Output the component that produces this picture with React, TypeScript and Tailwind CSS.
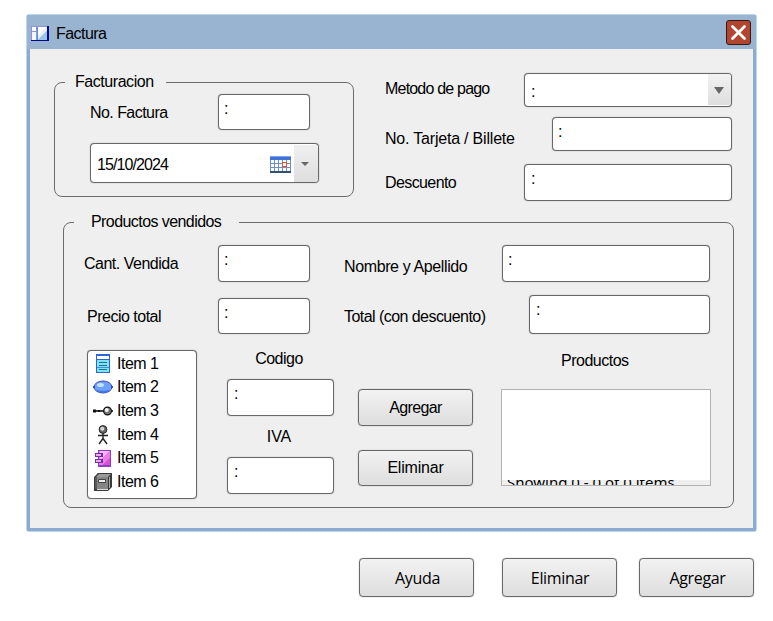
import React from "react";

type BoxProps = { className?: string; children?: React.ReactNode };

const edge = "border border-[#686868] rounded-[4px] shadow-[0_0_1px_#777]";

function Label({ className = "", children }: BoxProps) {
  return <span className={`block whitespace-nowrap leading-5 ${className}`}>{children}</span>;
}

function Field({ className = "" }: BoxProps) {
  return <div className={`shrink-0 bg-white pt-[4px] leading-5 ${edge} ${className}`}>:</div>;
}

function Button({ className = "", children }: BoxProps) {
  return (
    <button
      className={`flex w-[115px] shrink-0 items-center justify-center bg-linear-to-b from-[#f2f2f2] to-[#dedede] ${edge} ${className}`}
    >
      {children}
    </button>
  );
}

function WindowIcon() {
  return (
    <svg className="mt-[11px] ml-[4px] h-[15px] w-[18px]" viewBox="0 0 18 15" shapeRendering="crispEdges">
      <rect width="18" height="15" fill="#8f93d6" />
      <rect x="1" y="1" width="4" height="4" fill="#fff" />
      <rect x="1" y="6" width="4" height="8" fill="#f3f6ff" />
      <rect x="6" y="1" width="10" height="13" fill="#e4efff" />
      <path d="M7 14h9V4z" fill="#9cc3ee" />
      <path d="M7 1h8l-8 9z" fill="#fff" />
      <path d="M6 1h1v13H6z" fill="#5c8fe0" />
      <path d="M0 14h18v1H0zM16 0h2v15h-2z" fill="#08088c" />
    </svg>
  );
}

function CalendarIcon() {
  return (
    <svg className="h-[17px] w-[21px]" viewBox="0 0 21 17" shapeRendering="crispEdges">
      <rect width="21" height="17" fill="#6f8fc2" />
      <rect width="21" height="4" fill="#4071d8" />
      <rect width="21" height="1" fill="#7da2ee" />
      {[4, 8, 12].map((y) =>
        [1, 5, 9, 13, 17].map((x) => <rect key={`${x}-${y}`} x={x} y={y} width="3" height="3" fill="#f7faff" />),
      )}
      <path d="M0 15h21v2H0z" fill="#315071" />
      <rect x="12.5" y="6.5" width="4" height="4" fill="#fff" stroke="#f04b2b" />
    </svg>
  );
}

function ListIcon() {
  return (
    <svg className="h-[19px] w-[14px]" viewBox="0 0 14 19" shapeRendering="crispEdges">
      <rect width="14" height="19" fill="#2f62d6" />
      <rect x="1" y="2" width="12" height="3" fill="#fff" />
      <rect x="1" y="6" width="12" height="12" fill="#7fe4f4" />
      <path d="M3 8h8v1H3zM3 11h8v1H3zM3 15h8v1H3z" fill="#1d6f8f" />
      <path d="M1 13h12v1H1z" fill="#3e8fe0" />
    </svg>
  );
}

function EllipseIcon() {
  return (
    <svg className="h-[14px] w-[20px]" viewBox="0 0 20 14">
      <ellipse cx="10" cy="7" rx="9" ry="6" fill="#6ea2fb" stroke="#3a49b5" />
      <path d="M3 9.500c3 3.800 11 3.800 14 0-2 1-4 1.300-7 1.300s-5-.3-7-1.300z" fill="#3f74e2" />
      <ellipse cx="7.500" cy="5" rx="3.500" ry="2" fill="#c3e2ff" />
      <path d="M0 6h2v2H0zM18 6h2v2h-2z" fill="#3a49b5" />
    </svg>
  );
}

function LollipopIcon() {
  return (
    <svg className="h-[10px] w-[20px]" viewBox="0 0 20 10">
      <path d="M2 5h9M18 5h2" stroke="#000" strokeWidth="1.400" />
      <path d="M0 3.500h3v3H0zM5 4h2v2H5z" fill="#111" />
      <circle cx="14.500" cy="5" r="3.900" fill="#777" stroke="#111" strokeWidth="1.200" />
      <circle cx="13.700" cy="4" r="2" fill="#f2f2f2" />
    </svg>
  );
}

function PersonIcon() {
  return (
    <svg className="h-[20px] w-[12px]" viewBox="0 0 12 20">
      <circle cx="6" cy="4.500" r="3.900" fill="#6b6b6b" stroke="#222" />
      <circle cx="5.300" cy="3.700" r="2" fill="#d8d8d8" />
      <path d="M6 8v6M1 10.500h10M6 13.500L2 19M6 13.500l4 5.500" stroke="#222" strokeWidth="1.400" fill="none" />
    </svg>
  );
}

function ComponentIcon() {
  return (
    <svg className="h-[17px] w-[16px]" viewBox="0 0 16 17" shapeRendering="crispEdges">
      <rect x="3" width="13" height="17" fill="#8a3fc0" />
      <rect x="4" y="1" width="11" height="14" fill="#ee7be6" />
      <path d="M5 1h10L5 10z" fill="#ffb5f7" />
      <path d="M8 15l7-8v8z" fill="#d94fd0" />
      <path d="M0 3h8v4H0zM0 9h8v4H0z" fill="#6a2fa0" />
      <path d="M1 4h5v2H1zM1 10h5v2H1z" fill="#f2a9f5" />
    </svg>
  );
}

function BinderIcon() {
  return (
    <svg className="h-[18px] w-[18px]" viewBox="0 0 18 18">
      <path d="M0 4l4-4h14v14l-4 4H0z" fill="#3a3a3a" />
      <path d="M2 4l3-3h12l-3 3z" fill="#9a9a9a" />
      <path d="M3 4h11v12H3z" fill="#858585" />
      <path d="M1 4h2v12H1z" fill="#5a5a5a" />
      <path d="M4.500 6.500h7v3h-7z" fill="#eee" stroke="#444" />
      <path d="M3 16h11v1H3z" fill="#ddd" />
      <path d="M15.500 4v11" stroke="#aaa" />
    </svg>
  );
}

const items = [ListIcon, EllipseIcon, LollipopIcon, PersonIcon, ComponentIcon, BinderIcon];

function BillingGroup() {
  return (
    <fieldset className="ml-[24px] h-[125px] w-[300px] shrink-0 rounded-[8px] border border-[#6c6c6c]">
      <legend className="ml-[10px] h-5 w-[101px] pl-[10px] leading-[19px] tracking-[-0.45px]">Facturacion</legend>
      <div className="mt-[2px] flex">
        <Label className="ml-[35px] w-[128px] pt-[9px] tracking-[-0.55px]">No. Factura</Label>
        <Field className="h-[36px] w-[92px] pl-[5px]" />
      </div>
      <div className={`mt-[13px] ml-[35px] flex h-[40px] w-[229px] items-center bg-white ${edge}`}>
        <span className="w-[179px] pt-[3px] pl-[6px] tracking-[-0.9px]">15/10/2024</span>
        <div className="pt-[3px]">
          <CalendarIcon />
        </div>
        <div className="ml-auto flex h-[37px] w-[24px] items-center justify-center rounded-r-[3px] bg-linear-to-b from-[#f0f0f0] to-[#dedede] pt-[2px] pr-[2px]">
          <svg className="h-[4px] w-[8px]" viewBox="0 0 8 4"><path d="M0 0h8L4 4z" fill="#666" /></svg>
        </div>
      </div>
    </fieldset>
  );
}

function PaymentFields() {
  return (
    <div className="ml-[31px] flex w-[347px] flex-col pt-px">
      <div className="flex justify-between">
        <Label className="pt-[6px] tracking-[-0.8px]">Metodo de pago</Label>
        <div className={`flex h-[34px] w-[208px] justify-between bg-white ${edge}`}>
          <span className="pt-[8px] pl-[6px] leading-5">:</span>
          <div className="flex h-[31px] w-[23px] items-center justify-center rounded-r-[3px] bg-linear-to-b from-[#f2f2f2] to-[#dedede] pt-px pr-[2px]">
            <svg className="h-[7px] w-[10px]" viewBox="0 0 10 7"><path d="M0 0h10L5 7z" fill="#666" /></svg>
          </div>
        </div>
      </div>
      <div className="mt-[10px] flex justify-between">
        <Label className="pt-[12px] tracking-[-0.2px]">No. Tarjeta / Billete</Label>
        <Field className="h-[34px] w-[180px] pl-[5px]" />
      </div>
      <div className="mt-[13px] flex justify-between">
        <Label className="pt-[9px] tracking-[-0.6px]">Descuento</Label>
        <Field className="h-[37px] w-[208px] pl-[6px]" />
      </div>
    </div>
  );
}

function ProductsGroup() {
  return (
    <fieldset className="ml-[33px] h-[296px] w-[671px] rounded-[8px] border border-[#6c6c6c]">
      <legend className="ml-[10px] h-5 w-[165px] pl-[17px] leading-[19px] tracking-[-0.57px]">Productos vendidos</legend>
      <div className="mt-[13px] flex">
        <Label className="ml-[20px] w-[134px] pt-[9px] tracking-[-0.5px]">Cant. Vendida</Label>
        <Field className="h-[37px] w-[92px] pl-[5px]" />
        <Label className="ml-[34px] w-[158px] pt-[12px] tracking-[-0.38px]">Nombre y Apellido</Label>
        <Field className="h-[37px] w-[208px] pl-[5px]" />
      </div>
      <div className="mt-[13px] flex">
        <Label className="ml-[23px] w-[131px] pt-[12px] tracking-[-0.5px]">Precio total</Label>
        <Field className="mt-[3px] h-[36px] w-[92px] pl-[5px]" />
        <Label className="ml-[34px] w-[185px] pt-[12px] tracking-[-0.55px]">Total (con descuento)</Label>
        <Field className="h-[39px] w-[181px] pl-[6px]" />
      </div>
      <div className="mt-[16px] flex items-start">
        <ul className={`ml-[23px] h-[149px] w-[110px] bg-white pt-px ${edge}`}>
          {items.map((Icon, i) => (
            <li key={i} className="flex h-[23.600px] items-center">
              <span className="flex w-[29px] items-center justify-center">
                <Icon />
              </span>
              <span className="tracking-[-0.5px]">Item {i + 1}</span>
            </li>
          ))}
        </ul>
        <div className="ml-[30px] flex w-[107px] flex-col">
          <Label className="-mt-px mb-[10px] -ml-[3px] text-center tracking-[-0.5px]">Codigo</Label>
          <Field className="h-[37px] w-full pl-[6px]" />
          <Label className="mt-[11px] mb-[10px] -ml-[3px] text-center">IVA</Label>
          <Field className="h-[37px] w-full pl-[6px]" />
        </div>
        <div className="ml-[24px] flex flex-col gap-[24px] pt-[39px]">
          <Button className="h-[37px] pt-px tracking-[-0.6px]">Agregar</Button>
          <Button className="h-[36px] tracking-[-0.2px]">Eliminar</Button>
        </div>
        <div className="ml-[28px] w-[210px] pt-px">
          <Label className="mb-[18px] pl-[60px] tracking-[-0.5px]">Productos</Label>
          <div className="flex h-[97px] flex-col overflow-hidden border border-[#b2b2b2] bg-white">
            <div className="mt-auto h-[5px] overflow-hidden bg-[#efefef] pl-[5px]">
              <div className="-mt-[8px] font-['Noto_Sans',sans-serif] text-[15px] leading-5 whitespace-nowrap">
                Showing 0 - 0 of 0 items
              </div>
            </div>
          </div>
        </div>
      </div>
    </fieldset>
  );
}

export default function App() {
  return (
    <main className="h-[621px] w-[773px] overflow-hidden bg-white pt-[14px] pl-[26px] font-['Liberation_Sans',Arial,sans-serif] text-[16px] text-black">
      <section className="flex h-[518px] w-[731px] flex-col rounded-[3px] border border-[#bcd6ee] bg-[#efefef]">
        <header className="flex h-[34px] shrink-0 items-start bg-[#99b4d1]">
          <WindowIcon />
          <span className="pt-[9px] pl-[7px] leading-5 tracking-[-0.55px]">Factura</span>
          <button aria-label="Cerrar" className="mt-[5px] mr-[5px] ml-auto flex size-[25px] items-center justify-center rounded-[3px] border border-[#351815] bg-[#b2452d]">
            <svg className="size-[17px]" viewBox="0 0 17 17"><path d="M2.500 2.500l12 12M14.500 2.500l-12 12" stroke="#fff" strokeWidth="2.800" strokeLinecap="round" /></svg>
          </button>
        </header>
        <div className="flex-1 border-x-3 border-b-3 border-[#8dabcf] pt-[23px]">
          <div className="flex h-[140px] items-start">
            <BillingGroup />
            <PaymentFields />
          </div>
          <ProductsGroup />
        </div>
      </section>
      <footer className="mt-[26px] ml-[333px] flex font-['Open_Sans',sans-serif] tracking-[-0.35px]">
        <Button className="h-[39px] pl-[2px]">Ayuda</Button>
        <Button className="ml-[28px] h-[39px] pl-px">Eliminar</Button>
        <Button className="ml-[22px] h-[39px] pl-[2px]">Agregar</Button>
      </footer>
    </main>
  );
}
